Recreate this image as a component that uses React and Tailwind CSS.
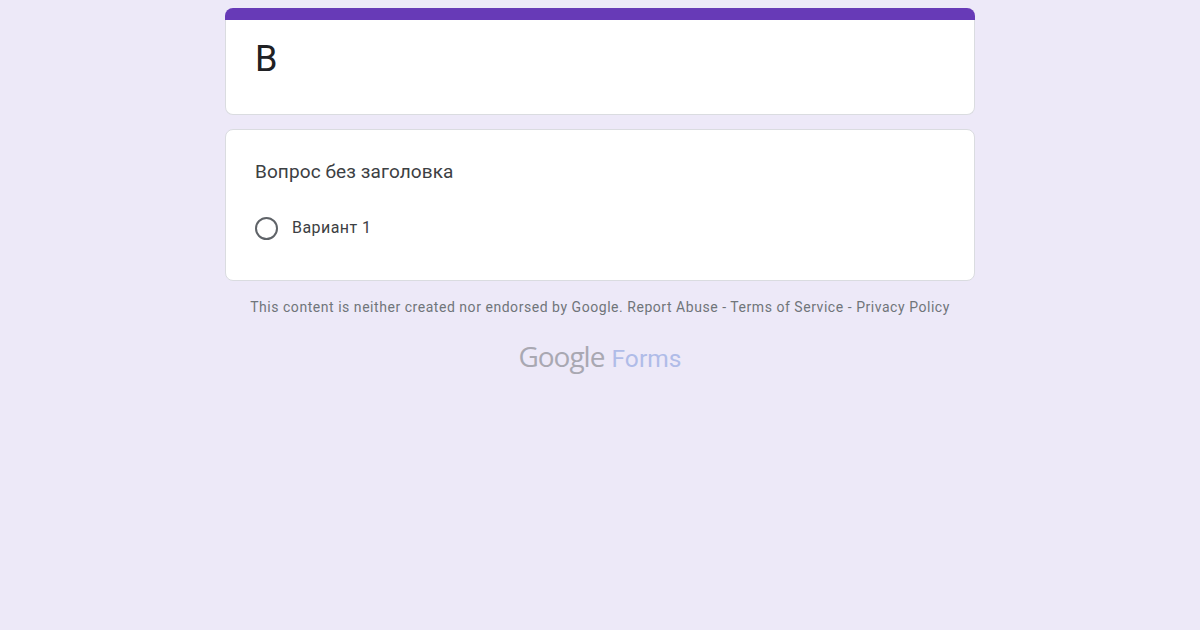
const App = () => {
  return (
    <div className="min-h-[630px] bg-[#ede9f8] font-['Roboto',sans-serif]">
      <div className="mx-auto flex w-[750px] flex-col pt-2">
        <div className="flex h-[107px] flex-col">
          <div className="h-3 rounded-t-lg bg-[#673ab7]" />
          <div className="flex-1 rounded-b-lg border border-t-0 border-[#dadce0] bg-white">
            <h1 className="pl-[29px] pt-[16px] text-[36px] leading-[46px] font-normal text-[#202124]">В</h1>
          </div>
        </div>

        <div className="mt-[14px] h-[152px] rounded-lg border border-[#dadce0] bg-white px-[29px] pt-[30px]">
          <div className="text-[19px] leading-6 tracking-[0.1px] text-[#3c4043]">Вопрос без заголовка</div>
          <div className="mt-[33px] flex items-center">
            <div className="h-[23px] w-[23px] rounded-full border-2 border-[#5f6368]" />
            <span className="ml-[14px] mt-[-2px] text-[16px] leading-6 tracking-[0.45px] text-[#3c4043]">Вариант 1</span>
          </div>
        </div>

        <div className="mt-[16px] text-center text-[14px] leading-5 tracking-[0.54px] whitespace-nowrap text-[#70757a]">
          This content is neither created nor endorsed by Google.{" "}
          <span>Report Abuse</span> - <span>Terms of Service</span> - <span>Privacy Policy</span>
        </div>

        <div className="mt-[23px] flex items-baseline justify-center gap-[7px] leading-8">
          <span className="font-['Open_Sans',sans-serif] text-[28px] font-medium tracking-[-1px] text-[#a9a8b2]">Google</span>
          <span className="text-[24.5px] tracking-[0.1px] text-[#b0bce8]">Forms</span>
        </div>
      </div>
    </div>
  );
};

export default App;
